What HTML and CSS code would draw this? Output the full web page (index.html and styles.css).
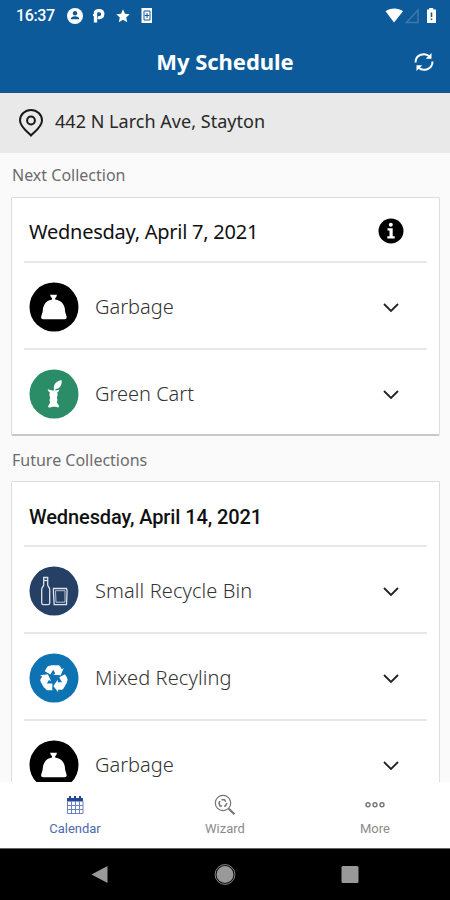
FILE: index.html
```html
<!DOCTYPE html>
<html lang="en">
<head>
<meta charset="utf-8">
<title>My Schedule</title>
<link rel="stylesheet" href="styles.css">
</head>
<body>
<svg class="defs" width="0" height="0">
  <symbol id="chevron" viewBox="0 0 18 12"><path d="M2 2l7 7 7-7" fill="none" stroke="#222" stroke-width="1.8"/></symbol>
  <symbol id="bag" viewBox="0 0 50 50"><circle cx="25" cy="25" r="24.500" fill="#000"/><path d="M21 12.700h7l-.8 2.600-1 .7v1.500c4 .6 6.600 2.300 8.400 5.500 1.300 2.300 1.300 4.300 1.600 7l1.400 4.500c.3 1.800-.4 2.700-2.100 2.700H14.300c-1.700 0-2.400-.9-2.100-2.700l1.400-4.500c.3-2.700.3-4.700 1.600-7 1.800-3.200 3.800-4.900 7.800-5.500V16l-1-.7z" fill="#fff"/></symbol>
  <symbol id="core" viewBox="0 0 50 50"><circle cx="25" cy="25" r="24.500" fill="#2b8c68"/><path d="M25 20.500c-.8-5 2-8.700 7.700-9.300.3 5-2 8.400-6 8.900l-.4 1.600 4-1.200c0 1.600-.9 2.400-2.100 2.700.7 2 .5 3.600-.4 5.200.9 2 .8 3.400 0 5l2.400 3.600-1 1.600-3-.8h-2.400l-3.800.9-1-1.500 2.200-3.800c-.8-1.600-.8-3.200 0-5-.9-1.600-1-3.300-.3-5.200-1.500-.5-2.100-1.400-2.100-2.900l5.500 1.500z" fill="#fff"/></symbol>
  <symbol id="bottle" viewBox="0 0 50 50"><circle cx="25" cy="25" r="24.500" fill="#263f64"/><g fill="none" stroke="#dce3ee" stroke-width="1.300"><path d="M14.700 11.500h4V19c0 1.500 2 2.200 2 4.500V37c0 1-.5 1.700-1.500 1.700h-5c-1 0-1.500-.7-1.500-1.700V23.500c0-2.300 2-3 2-4.500z"/><path d="M14.700 14.500h4"/><path d="M24.500 22.500h13l.6 2.500-.6 13.700H25.200L24.400 25z"/><path d="M26.500 24.700h9.500v11.500h-9z" stroke-width=".8"/></g></symbol>
  <symbol id="recycle" viewBox="0 0 50 50"><circle cx="25" cy="25" r="24.500" fill="#0d73b2"/><g fill="#fff" transform="translate(25 25.500) scale(.88) translate(-25 -26.300)"><g id="arm"><path d="M19 12.100c-1 .3-1.600.8-2.100 1.700L14.500 18l6.400 3.800 4-6.800-1.200-2c-.9-1.200-2.800-1.500-4.700-.9z"/><path d="M21 11.300h8c1.600 0 2.500.5 3.200 1.700l1.600 2.800 2.300-1.300-3.400 8.200-8.700-.7 2.500-1.500-3.500-6.100c-.6-1.300-1.100-2.200-2-3.100z"/></g><use href="#arm" transform="rotate(120 25 26.300)"/><use href="#arm" transform="rotate(240 25 26.300)"/></g></symbol>
</svg>
<div class="phone">
  <div class="status">
    <span class="time">16:37</span>
    <svg class="notifications" width="90" height="18" viewBox="0 0 90 18">
      <circle cx="8" cy="9" r="8" fill="#fff"/><circle cx="8" cy="6.300" r="2.200" fill="#0d5a9a"/><path d="M3.700 12.300c0-4 8.600-4 8.600 0z" fill="#0d5a9a"/>
      <path d="M28.500 15.500V5c1.500-2.200 7.300-2 7.300 2 0 3-2.500 4.200-5 3.500" fill="none" stroke="#fff" stroke-width="3.300"/><path d="M26 8h3" stroke="#fff" stroke-width="2"/>
      <path d="M56 2.300l2 4.400 4.700.5-3.500 3.200 1 4.800-4.200-2.400-4.200 2.400 1-4.800-3.500-3.200 4.700-.5z" fill="#fff"/>
      <path d="M74.500 1h10.500v15H74.500z" fill="#fff"/><path d="M77 4h6v9h-6z" fill="none" stroke="#0d5a9a" stroke-width="1"/><path d="M80 6v5M77.800 8.500h4.400" stroke="#0d5a9a"/>
    </svg>
    <svg class="signals" width="54" height="18" viewBox="0 0 54 18">
      <path d="M1.500 4.200C6.500 .7 14 .7 19 4.200L10 15.500z" fill="#fff"/>
      <path d="M34 3v12.500H22.500z" fill="none" stroke="#3d77ac" stroke-width="1.600"/>
      <path d="M43 2.500h2.200V1h4v1.500H52V16h-9z" fill="#fff"/><path d="M47.500 5.500v4.500M47.500 11.500v1.500" stroke="#0d5a9a" stroke-width="1.600"/>
    </svg>
  </div>
  <header class="header">
    <h1>My Schedule</h1>
    <svg class="refresh" width="20" height="20" viewBox="0 0 20 20"><g fill="none" stroke="#fff" stroke-width="2"><path d="M1.500 10.500C1.500 2.500 11 0 15.500 4.500M18.500 9.500c0 8-9.500 10.500-14 6"/></g><path d="M17.500 1v5.800h-5.800zM2.500 19v-5.800h5.800z" fill="#fff"/></svg>
  </header>
  <div class="address">
    <svg width="24" height="28" viewBox="0 0 24 28"><path d="M12 26.500C7.500 22 1 17.500 1 11.500a11 10.500 0 0 1 22 0c0 6-6.500 10.500-11 15z" fill="none" stroke="#181818" stroke-width="2"/><circle cx="12" cy="11.500" r="3.900" fill="none" stroke="#181818" stroke-width="2"/></svg>
    <span>442 N Larch Ave, Stayton</span>
  </div>
  <main class="content">
    <h2 class="label">Next Collection</h2>
    <section class="card">
      <div class="date"><span>Wednesday, April 7, 2021</span>
        <svg width="26" height="26" viewBox="0 0 26 26"><circle cx="13" cy="13" r="12.500" fill="#000"/><circle cx="12.800" cy="6.800" r="2" fill="#fff"/><path d="M9.500 10.200h5.200v8h2v2.300H9.300v-2.300h2.200v-5.700h-2z" fill="#fff"/></svg>
      </div>
      <div class="row"><svg class="badge"><use href="#bag"/></svg><span>Garbage</span><svg class="chevron"><use href="#chevron"/></svg></div>
      <div class="row"><svg class="badge"><use href="#core"/></svg><span>Green Cart</span><svg class="chevron"><use href="#chevron"/></svg></div>
    </section>
    <h2 class="label future">Future Collections</h2>
    <section class="card">
      <div class="date strong"><span>Wednesday, April 14, 2021</span></div>
      <div class="row"><svg class="badge"><use href="#bottle"/></svg><span class="wide">Small Recycle Bin</span><svg class="chevron"><use href="#chevron"/></svg></div>
      <div class="row"><svg class="badge"><use href="#recycle"/></svg><span class="wide">Mixed Recyling</span><svg class="chevron"><use href="#chevron"/></svg></div>
      <div class="row"><svg class="badge"><use href="#bag"/></svg><span>Garbage</span><svg class="chevron"><use href="#chevron"/></svg></div>
    </section>
  </main>
  <nav class="tabs">
    <div class="tab active">
      <svg width="20" height="22" viewBox="0 0 20 22"><path d="M2 4h16v3.500H2z" fill="#24469a"/><path d="M2.500 7v12.500h15.500V7M2 11.500h16M2 15.500h16M6.500 7v12M10.500 7v12M14.500 7v12" fill="none" stroke="#6c84be" stroke-width="1"/><path d="M5 2v3M10 2v3M15 2v3" stroke="#24469a" stroke-width="2"/></svg>
      <span>Calendar</span>
    </div>
    <div class="tab">
      <svg width="22" height="22" viewBox="0 0 22 22"><g fill="none" stroke="#777"><circle cx="9" cy="9" r="7.700" stroke-width="1.200"/><path d="M7.500 5.700h3l1.200 2M13 9l-1.500 3H10M8 12H6L5 9l1-2" stroke-width="1.600"/><path d="M14.700 14.700l5.800 5.500" stroke-width="2.200"/></g></svg>
      <span>Wizard</span>
    </div>
    <div class="tab">
      <svg width="22" height="22" viewBox="0 0 22 22"><g fill="none" stroke="#777" stroke-width="1.400"><circle cx="4" cy="10.800" r="2"/><circle cx="11" cy="10.800" r="2"/><circle cx="18" cy="10.800" r="2"/></g></svg>
      <span>More</span>
    </div>
  </nav>
  <div class="system">
    <svg width="22" height="22" viewBox="0 0 22 22"><path d="M2.500 10.500L18.500 2v17z" fill="#999"/></svg>
    <svg width="22" height="22" viewBox="0 0 22 22"><circle cx="11" cy="10.500" r="8.500" fill="#999"/><circle cx="11" cy="10.500" r="9.900" fill="none" stroke="#888" stroke-width="1"/></svg>
    <svg width="22" height="22" viewBox="0 0 22 22"><rect x="2.500" y="2" width="17" height="17" rx="1.500" fill="#999"/></svg>
  </div>
</div>
</body>
</html>
```
FILE: styles.css
```css
* { box-sizing: border-box; }
body { margin: 0; background: #fafafa; }
.defs { display: block; }
.phone {
  width: 450px; height: 900px; overflow: hidden;
  display: flex; flex-direction: column;
  font-family: "Noto Sans", "Open Sans", sans-serif;
}
.phone svg { display: block; flex: none; }
.status {
  height: 32px; flex: none; background: #0d5a9a; color: #fff;
  display: flex; align-items: center; padding: 0 12px 0 16px;
}
.time { font: 500 16px/32px Roboto, sans-serif; width: 51px; letter-spacing: -.4px; }
.signals { margin-left: auto; }
.header {
  height: 61px; flex: none; background: #0d5a9a; border-bottom: 1px solid #1b5288;
  display: grid; grid-template-columns: 30px 1fr 20px; align-items: center; padding: 0 16px;
}
.header h1 { grid-column: 2; margin: 0; color: #fff; text-align: center; font-size: 22px; line-height: 58px; font-weight: 700; letter-spacing: -.05px; padding: 0 10px 2px 0; }
.address {
  height: 60px; flex: none; background: #e9e9e9; color: #282828;
  display: flex; align-items: center; gap: 12px; padding: 0 19px; font-size: 18px;
}
.address span { padding-bottom: 4px; letter-spacing: .03px; }
.content { flex: 1; overflow: hidden; padding: 0 10px 0 11px; }
.label { margin: 0; padding-left: 1px; font-size: 16px; font-weight: 400; color: #6c6c6c; line-height: 44px; height: 44px; }
.label.future { line-height: 48px; height: 45px; }
.card { height: 239px; background: #fff; border: 1px solid #dcdcdc; border-bottom: 2px solid #c8c8c8; border-radius: 2px; padding: 0 12px; }
.card:last-child { height: 330px; }
.date { height: 63px; display: flex; align-items: center; justify-content: space-between; padding: 3px 23px 0 5px; font-size: 20px; letter-spacing: -.25px; color: #111; }
.date.strong { font: 500 20px Roboto, sans-serif; letter-spacing: -.1px; padding-top: 6px; }
.row { height: 87px; border-top: 2px solid #e7e7e7; display: flex; align-items: center; padding: 2px 27px 0 5px; font-size: 20px; font-weight: 300; color: #333; }
.row span { padding-bottom: 1px; }
.row .wide { letter-spacing: .1px; }
.badge { width: 50px; height: 50px; margin-right: 16px; }
.chevron { width: 18px; height: 12px; margin: 2px 0 0 auto; }
.tabs { height: 66px; flex: none; background: #fff; display: grid; grid-template-columns: repeat(3, 1fr); }
.tab { display: flex; flex-direction: column; align-items: center; padding-top: 12px; gap: 4px; font: 400 13px/18px Roboto, sans-serif; color: #8b8b8b; }
.tab.active { color: #4d69ad; }
.system { height: 52px; flex: none; background: #000; border-top: 1px solid #666; display: flex; justify-content: space-between; align-items: center; padding: 0 89px; }
```
